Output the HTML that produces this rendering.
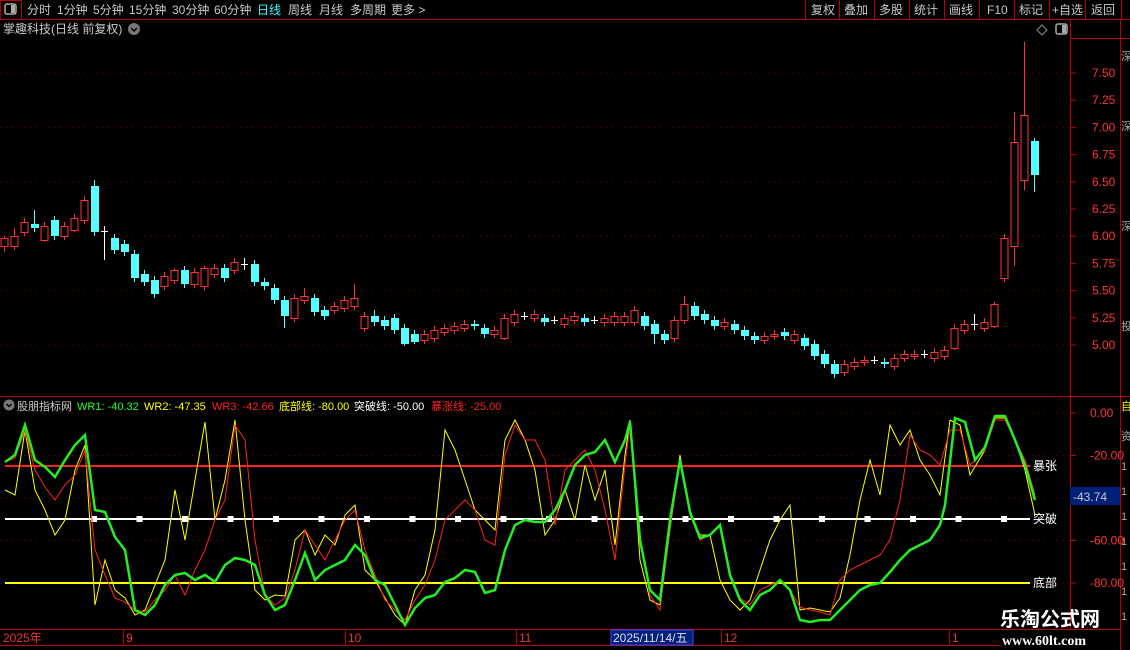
<!DOCTYPE html>
<html><head><meta charset="utf-8"><style>
body{margin:0;background:#000;width:1130px;height:650px;overflow:hidden;font-family:"Liberation Sans","Noto Sans CJK SC",sans-serif}
svg{position:absolute;left:0;top:0}
</style></head><body>
<svg id="s" width="1130" height="650" xmlns="http://www.w3.org/2000/svg" font-family="Liberation Sans, Noto Sans CJK SC, sans-serif">
<rect width="1130" height="650" fill="#000"/>
<line x1="0" y1="19.5" x2="1130" y2="19.5" stroke="#b00" />
<rect x="0.5" y="0.5" width="21" height="19" fill="none" stroke="#b00"/>
<rect x="5" y="4" width="11" height="10" rx="2" fill="none" stroke="#aaa" stroke-width="1.5"/><rect x="11" y="5" width="4" height="8" fill="#aaa"/>
<g font-size="12" fill="#c8c8c8">
<text x="27" y="14">分时</text><text x="57" y="14">1分钟</text><text x="93" y="14">5分钟</text><text x="129" y="14">15分钟</text><text x="172" y="14">30分钟</text><text x="214" y="14">60分钟</text><text x="257" y="14" fill="#3ff">日线</text><text x="288" y="14">周线</text><text x="319" y="14">月线</text><text x="350" y="14">多周期</text><text x="391" y="14">更多 &gt;</text>
<text x="811" y="14">复权</text><text x="844" y="14">叠加</text><text x="879" y="14">多股</text><text x="914" y="14">统计</text><text x="949" y="14">画线</text><text x="987" y="14">F10</text><text x="1019" y="14">标记</text><text x="1052" y="14">+自选</text><text x="1091" y="14">返回</text>
<text x="3" y="33">掌趣科技(日线 前复权)</text>
</g>
<g stroke="#b00"><line x1="805.5" y1="0" x2="805.5" y2="19"/><line x1="839.5" y1="0" x2="839.5" y2="19"/><line x1="874.5" y1="0" x2="874.5" y2="19"/><line x1="909.5" y1="0" x2="909.5" y2="19"/><line x1="944.5" y1="0" x2="944.5" y2="19"/><line x1="979.5" y1="0" x2="979.5" y2="19"/><line x1="1014.5" y1="0" x2="1014.5" y2="19"/><line x1="1049.5" y1="0" x2="1049.5" y2="19"/><line x1="1085.5" y1="0" x2="1085.5" y2="19"/><line x1="1121.5" y1="0" x2="1121.5" y2="19"/></g>
<circle cx="134" cy="29" r="6" fill="#777"/><path d="M131 28l3 3 3-3" stroke="#000" fill="none" stroke-width="1.5"/>
<path d="M1042 25l5 5-5 5-5-5z" fill="none" stroke="#888"/>
<rect x="1056" y="24" width="11" height="10" rx="2" fill="none" stroke="#aaa" stroke-width="1.5"/><rect x="1062" y="25" width="4" height="8" fill="#aaa"/>
<g stroke="#b00"><line x1="1070.5" y1="19" x2="1070.5" y2="630"/><line x1="1120.5" y1="19" x2="1120.5" y2="650"/><line x1="1070" y1="38.5" x2="1130" y2="38.5"/>
<line x1="0" y1="396.5" x2="1130" y2="396.5"/><line x1="0" y1="629.5" x2="1120" y2="629.5"/><line x1="0" y1="645.5" x2="1000" y2="645.5"/></g>
<g id="grid"></g>
<g id="c"></g>
<circle cx="9" cy="405" r="5.5" fill="#777"/><path d="M6.5 404l2.5 2.5 2.5-2.5" stroke="#000" fill="none" stroke-width="1.5"/>
<g font-size="11"><text x="17" y="410" fill="#c8c8c8">股朋指标网</text><text x="77" y="410" fill="#2f2">WR1: -40.32</text><text x="144" y="410" fill="#ff0">WR2: -47.35</text><text x="212" y="410" fill="#f22">WR3: -42.66</text><text x="279" y="410" fill="#ff0">底部线: -80.00</text><text x="354" y="410" fill="#fff">突破线: -50.00</text><text x="431" y="410" fill="#f22">暴涨线: -25.00</text></g>
<line x1="5" y1="466" x2="1030" y2="466" stroke="#f22" stroke-width="2"/>
<line x1="5" y1="519" x2="1030" y2="519" stroke="#fff" stroke-width="2"/>
<line x1="5" y1="583" x2="1030" y2="583" stroke="#ff0" stroke-width="2"/>
<g id="sq" fill="#fff"></g>
<g font-size="12" fill="#fff"><text x="1033" y="470">暴张</text><text x="1033" y="523">突破</text><text x="1033" y="587">底部</text></g>
<polyline id="y" fill="none" stroke="#ff0" stroke-width="1"/>
<polyline id="r" fill="none" stroke="#f22" stroke-width="1"/>
<polyline id="g" fill="none" stroke="#2e2" stroke-width="2.5"/>
<rect x="1070" y="487" width="50" height="18" fill="#00207a"/><text x="1073" y="501" font-size="12" fill="#ccc">-43.74</text>
<g font-size="12" fill="#e33"><text x="3" y="642">2025年</text><text x="126" y="642">9</text><text x="348" y="642">10</text><text x="519" y="642">11</text><text x="724" y="642">12</text><text x="952" y="642">1</text></g>
<g stroke="#b00"><line x1="123.5" y1="630" x2="123.5" y2="645"/><line x1="345.5" y1="630" x2="345.5" y2="645"/><line x1="516.5" y1="630" x2="516.5" y2="645"/><line x1="721.5" y1="630" x2="721.5" y2="645"/><line x1="949.5" y1="630" x2="949.5" y2="645"/></g>
<rect x="611" y="630" width="82" height="15" fill="#00207a" stroke="#44f"/><text x="613" y="642" font-size="12" fill="#dde">2025/11/14/五</text>
<g fill="#aaa" font-size="11"><text x="1121" y="60">深</text><text x="1121" y="130">深</text><text x="1121" y="230">深</text><text x="1121" y="330">投</text><text x="1121" y="410" fill="#ff0">自</text><text x="1121" y="440">资</text>
<text x="1121" y="470">1</text><text x="1121" y="495">1</text><text x="1121" y="520">1</text><text x="1121" y="545">1</text><text x="1121" y="570">1</text><text x="1121" y="595">1</text><text x="1121" y="620">1</text></g>
<text x="1000" y="626" font-size="20" font-weight="bold" fill="#fff">乐淘公式网</text>
<text x="1002" y="645" font-size="14" font-weight="bold" fill="#fff" font-family="Liberation Serif, serif">www.60lt.com</text>
</svg>
<script>
var N='http://www.w3.org/2000/svg';
function el(p,t,a){var e=document.createElementNS(N,t);for(var k in a)e.setAttribute(k,a[k]);p.appendChild(e);return e;}
var grid=document.getElementById('grid'),s=document.getElementById('s');
var prices=[7.5,7.25,7,6.75,6.5,6.25,6,5.75,5.5,5.25,5];
prices.forEach(function(p){var y=73+(7.5-p)*108.8;
 el(grid,'line',{x1:1070,y1:y,x2:1076,y2:y,stroke:'#b00'});
 var t=el(s,'text',{x:1092,y:y+4,'font-size':12,fill:'#f33'});t.textContent=p.toFixed(2);
 if((p*2)%1==0) el(grid,'line',{x1:0,y1:y,x2:1070,y2:y,stroke:'#700','stroke-dasharray':'1 5'});
});
[0,-20,-40,-60,-80].forEach(function(v){var y=413-v*2.125;
 el(grid,'line',{x1:1070,y1:y,x2:1076,y2:y,stroke:'#b00'});
 if(v!=-40){var t=el(s,'text',{x:1090,y:y+4,'font-size':12,fill:'#f33'});t.textContent=v==0?'0.00':v.toFixed(2);}
 el(grid,'line',{x1:0,y1:y,x2:1070,y2:y,stroke:'#700','stroke-dasharray':'1 5'});
});
var C=[[4,246,238,236,252],[14,246,236,228,250],[24,232,222,218,236],[34,224,228,210,232],[44,240,226,222,242],[54,220,236,216,240],[64,236,226,222,240],[74,230,218,214,232],[84,220,200,196,224],[94,186,232,180,236],[104,231,231,226,260],[114,238,250,234,254],[124,244,252,240,256],[134,254,278,250,282],[144,274,282,270,286],[154,280,294,276,298],[164,286,276,272,290],[174,280,270,268,284],[184,270,284,266,288],[194,284,272,268,288],[204,286,268,266,290],[214,274,268,264,278],[224,268,278,264,282],[234,270,262,258,274],[244,264,264,258,270],[254,264,282,260,286],[264,282,286,278,290],[274,288,300,284,304],[284,300,316,296,328],[294,318,298,294,322],[304,300,296,288,304],[314,298,312,294,316],[324,310,316,306,320],[334,310,306,302,314],[344,308,300,296,312],[354,306,298,284,310],[364,328,316,312,332],[374,316,322,310,326],[384,320,326,316,330],[394,318,330,314,334],[404,328,344,324,346],[414,334,342,330,344],[424,340,334,330,344],[434,338,330,326,342],[444,332,328,324,336],[454,330,326,322,334],[464,328,324,320,332],[474,324,326,320,330],[484,328,334,324,338],[494,334,330,326,338],[504,338,318,314,340],[514,322,314,310,326],[524,316,316,312,320],[534,318,314,310,322],[544,318,322,314,326],[554,320,320,316,324],[564,324,318,314,328],[574,320,316,312,324],[584,318,322,314,326],[594,320,320,316,324],[604,322,318,314,326],[614,322,316,312,326],[624,322,316,312,326],[634,322,310,306,326],[644,316,326,312,330],[654,324,334,320,344],[664,334,340,330,344],[674,338,320,316,342],[684,320,304,296,324],[694,306,316,302,320],[704,314,320,310,324],[714,320,326,316,330],[724,326,322,318,330],[734,324,330,320,334],[744,330,336,326,340],[754,336,340,332,344],[764,340,336,332,344],[774,336,334,330,340],[784,332,336,328,340],[794,340,334,330,344],[804,338,346,334,350],[814,344,356,340,360],[824,354,364,350,368],[834,364,374,360,378],[844,372,364,360,376],[854,366,362,358,370],[864,362,360,356,366],[874,360,360,356,364],[884,362,364,358,368],[894,366,358,354,370],[904,358,354,350,362],[914,356,354,350,360],[924,354,354,350,358],[934,358,352,348,362],[944,356,350,346,360],[954,348,328,324,350],[964,330,324,320,334],[974,324,324,314,330],[984,328,322,318,332],[994,326,304,302,328],[1004,278,238,234,282],[1014,246,142,112,266],[1024,180,115,42,190],[1034,141,175,138,192]];
var cg=document.getElementById('c');
C.forEach(function(c){var x=c[0],o=c[1],cl=c[2],h=c[3],l=c[4];
 var up=o>cl, same=o==cl, col=same?'#fff':(up?'#f33':'#5ff');
 var top=Math.min(o,cl),bot=Math.max(o,cl);
 el(cg,'line',{x1:x+0.5,y1:h,x2:x+0.5,y2:top,stroke:col});
 el(cg,'line',{x1:x+0.5,y1:bot,x2:x+0.5,y2:l,stroke:col});
 if(same) el(cg,'line',{x1:x-3,y1:o+0.5,x2:x+4,y2:o+0.5,stroke:col});
 else if(up) el(cg,'rect',{x:x-3,y:top+0.5,width:7,height:bot-top,fill:'#000',stroke:col});
 else el(cg,'rect',{x:x-3,y:top,width:8,height:bot-top,fill:col});
});
function pts(a){var r=[];for(var i=0;i<a.length;i+=2)r.push(a[i]+','+a[i+1]);return r.join(' ');}
document.getElementById('g').setAttribute('points',pts([5,462,15,455,25,425,35,460,45,467,55,477,65,460,75,445,85,435,95,510,105,512,115,537,125,550,135,610,145,615,155,605,165,585,175,575,185,573,195,580,205,575,215,582,225,565,235,558,245,560,255,565,265,595,275,610,285,605,295,580,305,553,315,580,325,570,335,565,345,560,355,545,365,555,375,580,385,585,395,605,405,625,415,608,425,598,435,595,445,582,455,578,465,570,475,572,485,593,495,590,505,550,515,525,525,520,535,522,545,522,555,510,565,490,575,465,585,455,595,452,605,440,615,462,625,440,630,422,640,540,650,590,660,600,670,520,680,460,690,512,700,538,710,535,720,525,730,575,740,600,750,610,760,595,770,590,780,580,790,590,800,620,810,622,820,620,830,620,840,610,850,600,860,590,870,585,880,583,890,572,900,560,910,550,920,545,930,540,940,525,945,505,955,418,965,422,975,460,985,447,995,416,1005,416,1015,440,1025,465,1035,500]));
document.getElementById('r').setAttribute('points',pts([5,462,15,458,25,430,35,470,45,487,55,500,65,485,75,475,85,450,95,550,105,575,115,598,125,602,135,610,145,612,155,600,165,590,175,575,185,595,195,570,205,550,215,520,225,500,235,425,245,440,255,540,265,595,275,605,285,598,295,570,305,530,315,545,325,560,335,540,345,520,355,510,365,550,375,575,385,600,395,610,405,620,415,600,425,585,435,560,445,520,455,510,465,500,475,510,485,540,495,545,505,455,515,425,525,440,535,440,545,460,555,525,565,470,575,460,585,450,595,470,605,510,615,560,625,465,630,425,640,540,650,595,660,610,670,530,680,460,690,515,700,540,710,535,720,525,730,575,740,598,750,605,760,590,770,585,780,580,790,590,800,607,810,610,820,612,830,615,840,580,850,570,860,565,870,560,880,555,890,540,900,500,910,435,920,450,930,455,940,465,950,430,960,430,970,465,985,450,995,420,1005,420,1015,440,1025,460,1035,495]));
document.getElementById('y').setAttribute('points',pts([5,490,15,495,25,430,35,490,45,510,55,535,65,520,75,470,85,445,95,605,105,560,115,590,125,598,135,615,145,610,155,585,165,560,175,490,185,540,195,480,205,422,215,520,225,480,235,420,245,520,255,590,265,600,275,595,285,596,295,540,305,530,315,555,325,535,335,545,345,515,355,505,365,570,375,580,385,598,395,615,405,625,415,590,425,575,435,530,445,430,455,450,465,480,475,510,485,520,495,530,505,440,515,420,525,440,535,470,545,535,555,520,565,490,575,520,585,465,595,500,605,470,615,545,625,455,630,420,640,560,650,600,660,605,670,530,680,455,690,515,700,535,710,535,720,580,730,600,740,610,750,600,760,570,770,540,780,520,790,505,800,610,810,608,820,610,830,612,840,598,850,555,860,500,870,460,880,495,890,425,900,445,910,430,920,460,930,475,940,495,950,420,960,425,970,475,985,450,995,418,1005,418,1015,440,1025,470,1035,515]));
var sq=document.getElementById('sq');
for(var x=94;x<1030;x+=45.5) el(sq,'rect',{x:x-3,y:516,width:6,height:6});
</script>
</body></html>
